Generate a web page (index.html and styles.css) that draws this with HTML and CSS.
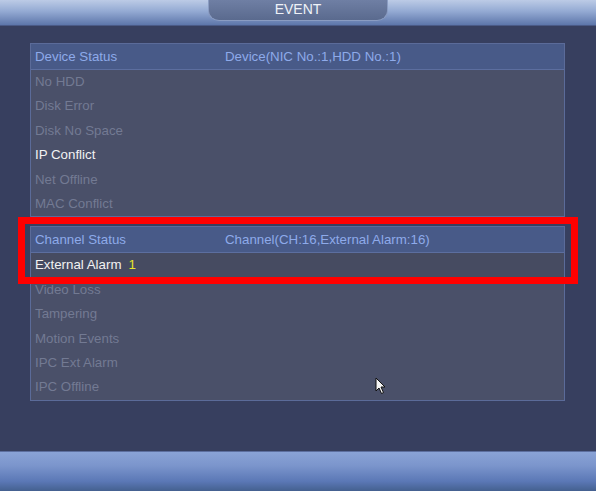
FILE: index.html
```html
<!DOCTYPE html>
<html>
<head>
<meta charset="utf-8">
<link rel="stylesheet" href="styles.css">
</head>
<body>
<div class="screen">
  <div class="topbar">
    <div class="title">EVENT</div>
  </div>
  <div class="content">
    <div class="panel">
      <div class="head"><span class="c1">Device Status</span><span class="c2">Device(NIC No.:1,HDD No.:1)</span></div>
      <div class="row dim">No HDD</div>
      <div class="row dim">Disk Error</div>
      <div class="row dim">Disk No Space</div>
      <div class="row on">IP Conflict</div>
      <div class="row dim">Net Offline</div>
      <div class="row dim">MAC Conflict</div>
    </div>
    <div class="panel">
      <div class="head"><span class="c1">Channel Status</span><span class="c2">Channel(CH:16,External Alarm:16)</span></div>
      <div class="row on sel">External Alarm<span class="num">1</span></div>
      <div class="row dim">Video Loss</div>
      <div class="row dim">Tampering</div>
      <div class="row dim">Motion Events</div>
      <div class="row dim">IPC Ext Alarm</div>
      <div class="row dim">IPC Offline</div>
    </div>
  </div>
  <div class="bottombar"></div>
  <div class="highlight"></div>
  <svg class="cursor" width="12" height="18" viewBox="0 0 12 18"><path d="M1 1 L1 14 L4 11 L6.5 16.5 L8.5 15.6 L6 10 L10 10 Z" fill="#f4f4f4" stroke="#111" stroke-width="1"/></svg>
</div>
</body>
</html>
```

FILE: styles.css
```css
html, body {
  margin: 0;
  padding: 0;
  background: #ffffff;
}
body {
  font-family: "Liberation Sans", Arial, sans-serif;
  font-size: 13.3px;
}
.screen {
  position: relative;
  width: 596px;
  height: 491px;
  background: #373f5f;
  display: flex;
  flex-direction: column;
}
.topbar {
  height: 25px;
  background: linear-gradient(#bccbe6 0%, #94aad3 45%, #5d76aa 100%);
  border-bottom: 1px solid #4a5a86;
  display: flex;
  justify-content: center;
}
.title {
  width: 178px;
  height: 20px;
  border-radius: 0 0 11px 11px / 0 0 10px 10px;
  background: linear-gradient(#6f7fa4, #5a6a8e);
  border: 1px solid #8a9cc2;
  border-top: none;
  color: #eef1f7;
  font-size: 14px;
  line-height: 19px;
  text-align: center;
}
.content {
  flex: 1;
  padding: 17px 0 0 30px;
  display: flex;
  flex-direction: column;
  gap: 9px;
}
.panel {
  width: 533px;
  background: #4a5069;
  border: 1px solid #5b6b99;
}
.head {
  height: 25px;
  background: #485a88;
  border-bottom: 1px solid #5c6e9f;
  display: flex;
  align-items: center;
  padding-left: 4px;
  color: #8eaaea;
}
.c1 { width: 190px; }
.row {
  height: 24.4px;
  line-height: 23px;
  padding-left: 4px;
}
.dim { color: #737a93; }
.on { color: #f2f2f2; }
.sel { background: #464b61; }
.num {
  color: #e6e62a;
  margin-left: 7px;
}
.bottombar {
  height: 39px;
  border-top: 1px solid #5d6f9f;
  background: linear-gradient(#8aa3d6 0%, #7b95cc 35%, #5b78b6 75%, #44608f 100%);
}
.highlight {
  position: absolute;
  left: 18px;
  top: 217px;
  width: 546px;
  height: 53px;
  border: 7px solid #ff0000;
}
.cursor {
  position: absolute;
  left: 375px;
  top: 377px;
}
```
